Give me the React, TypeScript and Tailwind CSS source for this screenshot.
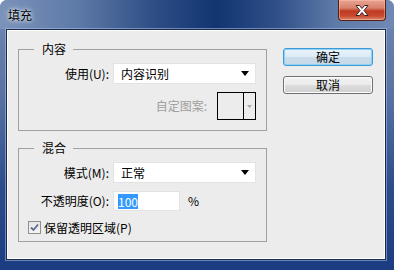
import React from "react";

function Combo({ value, width }: { value: string; width: string }) {
  return (
    <div
      className={`${width} h-[21px] bg-white border border-[#e3e3e3] flex items-center justify-between pl-[7px] pr-[6px]`}
    >
      <span className="text-[12px] text-black leading-none">{value}</span>
      <svg width="8" height="5" viewBox="0 0 8 5">
        <path d="M0 0 L8 0 L4 5 Z" fill="#000" />
      </svg>
    </div>
  );
}

function Group({ label, h, children }: { label: string; h: string; children: React.ReactNode }) {
  return (
    <div className={`relative ${h} border border-[#a0a0a0]`}>
      <div className="absolute left-[15px] top-[-9px] bg-[#ececec] pl-[8px] pr-[7px] text-[12px] leading-[16px] text-black">
        {label}
      </div>
      {children}
    </div>
  );
}

export default function App() {
  return (
    <div className="w-[394px] h-[270px] overflow-hidden bg-white font-['Noto_Sans_CJK_SC','Microsoft_YaHei',sans-serif]">
      <div className="relative w-[394px] h-[270px] rounded-t-[7px] bg-[linear-gradient(to_bottom,#7189b3_0%,#5873a3_35%,#2c4b8a_70%,#1c3c82_100%)] flex flex-col">
        {/* title bar */}
        <div className="h-[29px] shrink-0 rounded-t-[7px] bg-[linear-gradient(to_right,#7b93ba_0%,#5d79a7_20%,#2c4c84_40%,#123570_55%,#2f4f88_70%,#5e7aa8_85%,#7089b4_100%)] flex items-start justify-between">
          <div className="pl-[8px] pt-[6px] text-[12px] leading-[18px] text-black [text-shadow:0_0_6px_rgba(255,255,255,0.9),0_0_3px_rgba(255,255,255,0.9)]">
            填充
          </div>
          <div className="mr-[8px] w-[48px] h-[21px] rounded-b-[4px] border border-t-0 border-[#5a1f14] bg-[linear-gradient(to_bottom,#e8a594_0%,#d8806a_40%,#bf3a22_55%,#c74a30_80%,#df8a6c_100%)] flex items-center justify-center shadow-[inset_0_0_0_1px_rgba(255,200,180,0.45)]">
            <svg width="16" height="13" viewBox="0 0 16 13">
              <path
                d="M2 1.5 L5.5 1.5 L8 4.5 L10.5 1.5 L14 1.5 L10 6.5 L14 11.5 L10.5 11.5 L8 8.5 L5.5 11.5 L2 11.5 L6 6.5 Z"
                fill="#ffffff"
                stroke="#3a2420"
                strokeWidth="1"
                strokeLinejoin="round"
              />
            </svg>
          </div>
        </div>

        {/* client */}
        <div className="ml-[6px] w-[380px] h-[231px] border border-[#1b2a48] bg-[#ececec] shadow-[0_0_0_1px_rgba(170,195,235,0.55)]">
          <div className="w-full h-full border border-white flex pl-[10px] pt-[17px]">
            {/* left column */}
            <div className="w-[249px] flex flex-col gap-[17px] mt-[1px]">
              <Group label="内容" h="h-[82px]">
                <div className="flex flex-col pt-[13px]">
                  <div className="flex items-center">
                    <div className="w-[90px] text-right text-[12px] text-black leading-none">使用(U):</div>
                    <div className="ml-[4px]">
                      <Combo value="内容识别" width="w-[143px]" />
                    </div>
                  </div>
                  <div className="flex items-center justify-end pr-[10px] mt-[8px]">
                    <div className="text-[12px] text-[#a0a0a0] leading-none mr-[10px]">自定图案:</div>
                    <div className="w-[39px] h-[28px] border border-black bg-[#ececec] flex">
                      <div className="flex-1 border-r border-black" />
                      <div className="w-[11px] flex items-center justify-center">
                        <svg width="5" height="3" viewBox="0 0 5 3">
                          <path d="M0 0 L5 0 L2.5 3 Z" fill="#a8a8a8" />
                        </svg>
                      </div>
                    </div>
                  </div>
                </div>
              </Group>

              <Group label="混合" h="h-[94px]">
                <div className="flex flex-col pt-[13px]">
                  <div className="flex items-center">
                    <div className="w-[90px] text-right text-[12px] text-black leading-none">模式(M):</div>
                    <div className="ml-[4px]">
                      <Combo value="正常" width="w-[143px]" />
                    </div>
                  </div>
                  <div className="flex items-center mt-[8px]">
                    <div className="w-[90px] text-right text-[12px] text-black leading-none">不透明度(O):</div>
                    <div className="ml-[4px] w-[67px] h-[20px] bg-white border border-[#e3e3e3] flex items-center pl-[4px]">
                      <span className="bg-[#3399ff] text-white text-[12px] leading-[15px]">100</span>
                    </div>
                    <div className="ml-[8px] text-[12px] text-black leading-none">%</div>
                  </div>
                  <div className="flex items-center mt-[10px] pl-[9px]">
                    <div className="w-[13px] h-[13px] border border-[#8e8f8f] bg-[linear-gradient(to_bottom,#e6e6e6,#f4f4f4)] flex items-center justify-center">
                      <svg width="9" height="9" viewBox="0 0 9 9">
                        <path d="M1 4.5 L3.5 7 L8 1.5" fill="none" stroke="#5a6a8e" strokeWidth="1.8" />
                      </svg>
                    </div>
                    <div className="ml-[3px] text-[12px] text-black leading-none">保留透明区域(P)</div>
                  </div>
                </div>
              </Group>
            </div>

            {/* right column */}
            <div className="ml-[16px] flex flex-col gap-[10px]">
              <button className="w-[90px] h-[18px] rounded-[3px] border border-[#3c9ad9] bg-[linear-gradient(to_bottom,#eaf4fb_0%,#dbeaf5_50%,#c9dceb_51%,#c4d8e8_100%)] shadow-[inset_0_0_0_1px_#8fd0f3] text-[12px] leading-none text-black flex items-center justify-center">
                确定
              </button>
              <button className="w-[90px] h-[18px] rounded-[3px] border border-[#707070] bg-[linear-gradient(to_bottom,#f2f2f2_0%,#ebebeb_50%,#dddddd_51%,#cfcfcf_100%)] shadow-[inset_0_0_0_1px_#fcfcfc] text-[12px] leading-none text-black flex items-center justify-center">
                取消
              </button>
            </div>
          </div>
        </div>
      </div>
    </div>
  );
}
